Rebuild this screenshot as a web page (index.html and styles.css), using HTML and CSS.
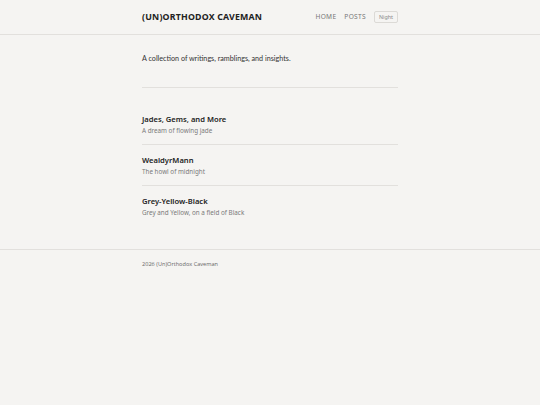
FILE: index.html
```html
<!DOCTYPE html>
<html lang="en">
<head>
    <meta charset="UTF-8">
    <meta name="viewport" content="width=device-width, initial-scale=1.0">
    <title>(Un)Orthodox Caveman</title>
    <link rel="stylesheet" href="styles.css">
</head>
<body>
    <header class="site-header">
        <div class="wrap header-inner">
            <a class="site-title" href="#">(UN)ORTHODOX CAVEMAN</a>
            <nav class="nav">
                <a href="#">HOME</a>
                <a href="#">POSTS</a>
                <button class="theme-toggle">Night</button>
            </nav>
        </div>
    </header>

    <main class="wrap">
        <p class="intro">A collection of writings, ramblings, and insights.</p>
        <ul class="post-list">
            <li class="post">
                <a class="post-title" href="#">Jades, Gems, and More</a>
                <p class="post-sub">A dream of flowing jade</p>
            </li>
            <li class="post">
                <a class="post-title" href="#">WealdyrMann</a>
                <p class="post-sub">The howl of midnight</p>
            </li>
            <li class="post">
                <a class="post-title" href="#">Grey-Yellow-Black</a>
                <p class="post-sub">Grey and Yellow, on a field of Black</p>
            </li>
        </ul>
    </main>

    <footer class="site-footer">
        <div class="wrap">2026 (Un)Orthodox Caveman</div>
    </footer>
</body>
</html>
```

FILE: styles.css
```css
body {
    margin: 0;
    background-color: #f5f4f2;
    color: #2b2b2b;
    font-family: 'Noto Sans', 'Open Sans', sans-serif;
}
a {
    color: inherit;
    text-decoration: none;
}
.wrap {
    width: 256px;
    margin: 0 auto;
}
.site-header {
    border-bottom: 1px solid #e2e0dd;
}
.header-inner {
    height: 34px;
    display: flex;
    align-items: center;
    justify-content: space-between;
}
.site-title {
    font-weight: 700;
    font-size: 8.8px;
    letter-spacing: 0.2px;
    color: #222;
}
.nav {
    display: flex;
    align-items: center;
    gap: 8px;
    font-size: 6.6px;
    color: #777;
    letter-spacing: 0.3px;
}
.theme-toggle {
    font-family: inherit;
    font-size: 5.4px;
    color: #888;
    background: transparent;
    border: 1px solid #dcdad6;
    border-radius: 2px;
    padding: 2px 4px;
    line-height: 1.2;
    cursor: pointer;
}
.intro {
    font-family: Lato, sans-serif;
    font-size: 7.2px;
    line-height: 10px;
    color: #333;
    margin: 19px 0 0;
    padding-bottom: 23px;
    border-bottom: 1px solid #e2e0dd;
}
.post-list {
    list-style: none;
    margin: 0;
    padding: 16px 0 0;
}
.post {
    padding: 10px 0 9px;
    border-bottom: 1px solid #e2e0dd;
}
.post:last-child {
    border-bottom: none;
}
.post-title {
    display: block;
    font-weight: 600;
    font-size: 7.6px;
    line-height: 10px;
    color: #222;
}
.post-sub {
    margin: 2px 0 0;
    font-size: 6.3px;
    line-height: 9px;
    color: #7a7a7a;
}
.site-footer {
    margin-top: 23px;
    border-top: 1px solid #e2e0dd;
    padding: 10px 0;
    font-family: 'Open Sans', sans-serif;
    font-size: 5.6px;
    line-height: 8px;
    color: #666;
}
```
